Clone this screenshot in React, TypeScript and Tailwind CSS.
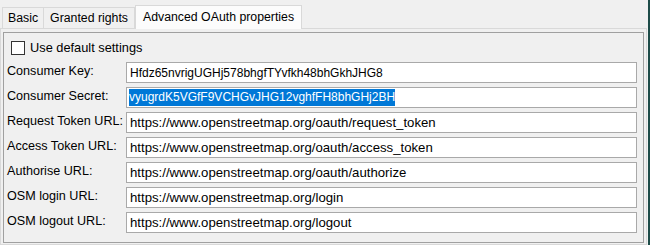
const rows: { label: string; value: string; selected?: boolean; url?: boolean }[] = [
  { label: "Consumer Key:", value: "Hfdz65nvrigUGHj578bhgfTYvfkh48bhGkhJHG8" },
  { label: "Consumer Secret:", value: "vyugrdK5VGfF9VCHGvJHG12vghfFH8bhGHj2BH", selected: true },
  { label: "Request Token URL:", value: "https://www.openstreetmap.org/oauth/request_token", url: true },
  { label: "Access Token URL:", value: "https://www.openstreetmap.org/oauth/access_token", url: true },
  { label: "Authorise URL:", value: "https://www.openstreetmap.org/oauth/authorize", url: true },
  { label: "OSM login URL:", value: "https://www.openstreetmap.org/login", url: true },
  { label: "OSM logout URL:", value: "https://www.openstreetmap.org/logout", url: true },
];

export default function App() {
  return (
    <div
      className="w-[650px] h-[245px] bg-[#f0f0f0] border-r-2 border-[#1d4b48] text-[12.6px] text-black overflow-hidden"
      style={{ fontFamily: '"Liberation Sans", Arial, sans-serif' }}
    >
      {/* tab strip */}
      <div className="flex items-end h-[28px] pl-[2px] pt-[4px] text-[12.3px]">
        <div className="h-[21px] px-[5px] border border-b-0 border-[#d9d9d9] flex items-center">Basic</div>
        <div className="h-[21px] px-[6px] border border-b-0 border-l-0 border-[#d9d9d9] flex items-center">Granted rights</div>
        <div className="h-[24px] px-[7px] border border-b-0 border-[#d9d9d9] bg-[#fcfcfc] flex items-center -mb-px relative">
          Advanced OAuth properties
        </div>
      </div>

      {/* tab page */}
      <div className="w-[647px] h-[217px] border border-[#d9d9d9] px-[2px] pt-[3px] pb-[1px]">
        <div className="h-full border border-[#a0a0a0] pl-[3px] pr-[6px] pt-[6px]">
          <label className="flex items-center gap-[5px] pl-[4px] h-[18px]">
            <span className="w-[14px] h-[14px] border border-[#333] bg-white" />
            <span className="text-[12.8px]">Use default settings</span>
          </label>
          <div className="mt-[5px] flex flex-col gap-[4px]">
            {rows.map((r) => (
              <div key={r.label} className="flex h-[21px]">
                <div className="w-[119px] shrink-0 pt-[1px] leading-[16px]">{r.label}</div>
                <div className="flex-1 border border-[#a9a9a9] bg-white flex items-center pl-[2px]">
                  {r.selected ? (
                    <span className="bg-[#0078d7] text-white leading-[17px] text-[12px]">{r.value}</span>
                  ) : r.url ? (
                    <span className="pl-px text-[13.2px]">{r.value}</span>
                  ) : (
                    <span className="pl-px text-[12px]">{r.value}</span>
                  )}
                </div>
              </div>
            ))}
          </div>
        </div>
      </div>
    </div>
  );
}
